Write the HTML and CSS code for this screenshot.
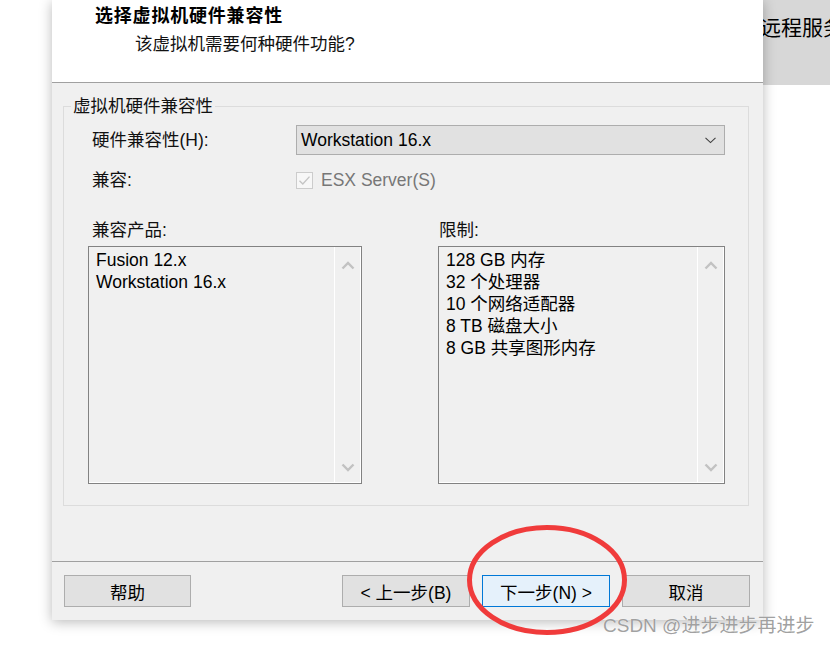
FILE: index.html
```html
<!DOCTYPE html>
<html lang="zh-CN">
  <head>
    <meta charset="UTF-8" />
    <meta name="viewport" content="width=device-width, initial-scale=1.0" />
    <title>新建虚拟机向导 - 选择虚拟机硬件兼容性</title>
    <link rel="stylesheet" href="styles.css">
  </head>
  <body>
    <div class="screen">
      <div class="gutter"></div>

      <div class="dialog">
        <div class="dialog-header">
          <div class="title">选择虚拟机硬件兼容性</div>
          <div class="subtitle">该虚拟机需要何种硬件功能?</div>
        </div>

        <div class="dialog-body">
          <fieldset class="group">
            <legend>虚拟机硬件兼容性</legend>

            <div class="row">
              <span class="label">硬件兼容性(H):</span>
              <div class="select">
                <span>Workstation 16.x</span>
                <svg width="11" height="7" viewBox="0 0 11 7"><path d="M0.5 0.8 L5.5 5.6 L10.5 0.8" fill="none" stroke="#404040" stroke-width="1.1"/></svg>
              </div>
            </div>

            <div class="row row-compat">
              <span class="label">兼容:</span>
              <span class="checkbox">
                <svg width="15" height="15" viewBox="0 0 15 15"><path d="M2.5 7.8 L5.8 11 L12.5 3.6" fill="none" stroke="#c4c4c4" stroke-width="1.4"/></svg>
              </span>
              <span class="check-label">ESX Server(S)</span>
            </div>

            <div class="lists">
              <div class="list-col list-products">
                <div class="list-title">兼容产品:</div>
                <div class="listbox">
                  <ul class="items">
                    <li>Fusion 12.x</li>
                    <li>Workstation 16.x</li>
                  </ul>
                  <div class="scrollbar">
                    <svg width="14" height="9" viewBox="0 0 14 9"><path d="M1.5 7.5 L7 2 L12.5 7.5" fill="none" stroke="#c2c2c2" stroke-width="2.4"/></svg>
                    <svg width="14" height="9" viewBox="0 0 14 9"><path d="M1.5 1.5 L7 7 L12.5 1.5" fill="none" stroke="#c2c2c2" stroke-width="2.4"/></svg>
                  </div>
                </div>
              </div>

              <div class="list-col list-limits">
                <div class="list-title">限制:</div>
                <div class="listbox">
                  <ul class="items">
                    <li>128 GB 内存</li>
                    <li>32 个处理器</li>
                    <li>10 个网络适配器</li>
                    <li>8 TB 磁盘大小</li>
                    <li>8 GB 共享图形内存</li>
                  </ul>
                  <div class="scrollbar">
                    <svg width="14" height="9" viewBox="0 0 14 9"><path d="M1.5 7.5 L7 2 L12.5 7.5" fill="none" stroke="#c2c2c2" stroke-width="2.4"/></svg>
                    <svg width="14" height="9" viewBox="0 0 14 9"><path d="M1.5 1.5 L7 7 L12.5 1.5" fill="none" stroke="#c2c2c2" stroke-width="2.4"/></svg>
                  </div>
                </div>
              </div>
            </div>
          </fieldset>
        </div>

        <div class="dialog-footer">
          <button class="btn btn-help">帮助</button>
          <button class="btn">&lt; 上一步(B)</button>
          <button class="btn btn-default">下一步(N) &gt;</button>
          <button class="btn">取消</button>
        </div>
      </div>

      <div class="side">
        <div class="side-top">远程服务</div>
      </div>

      <svg class="mark" width="160" height="110" viewBox="0 0 160 110">
        <ellipse cx="80" cy="55" rx="77.5" ry="52.5" fill="none" stroke="#f03b3b" stroke-width="5"/>
      </svg>
      <div class="watermark">CSDN @进步进步再进步</div>
    </div>
  </body>
</html>
```

FILE: styles.css
```css
* {
  box-sizing: border-box;
  margin: 0;
  padding: 0;
}

body {
  font-family: "Liberation Sans", "Noto Sans CJK SC", sans-serif;
  font-size: 17.5px;
  color: #111;
  background-color: #fff;
}

.screen {
  position: relative;
  display: flex;
  align-items: flex-start;
  width: 830px;
  height: 645px;
  overflow: hidden;
}

.gutter {
  flex: 0 0 52px;
}

.dialog {
  position: relative;
  z-index: 1;
  flex: 0 0 711px;
  height: 620px;
  display: flex;
  flex-direction: column;
  background-color: #f0f0f0;
  box-shadow: 0 2px 12px rgba(0, 0, 0, 0.28);
}

/* header */
.dialog-header {
  height: 83px;
  padding: 5px 0 0 43px;
  background-color: #fff;
  border-bottom: 1px solid #a0a0a0;
}

.title {
  font-size: 18px;
  font-weight: bold;
  line-height: 22px;
  letter-spacing: 0.8px;
  color: #000;
}

.subtitle {
  margin: 6px 0 0 40px;
  line-height: 22px;
}

/* body */
.dialog-body {
  flex: 1;
  padding: 12px 14px 0 11px;
}

.group {
  min-width: 0;
  border: 1px solid #dcdcdc;
  padding: 8px 23px 21px 28px;
}

.group legend {
  margin-left: -21px;
  padding: 0 2px;
  line-height: 22px;
}

.row {
  display: flex;
  align-items: center;
  height: 30px;
}

.row-compat {
  height: 22px;
  margin-top: 14px;
}

.label {
  flex: 0 0 204px;
  line-height: 22px;
}

.select {
  display: flex;
  align-items: center;
  justify-content: space-between;
  width: 429px;
  height: 30px;
  padding: 0 8px 0 4px;
  background-color: #e1e1e1;
  border: 1px solid #adadad;
  color: #000;
}

.checkbox {
  display: flex;
  align-items: center;
  justify-content: center;
  width: 17px;
  height: 17px;
  border: 1px solid #cccccc;
  background-color: #f7f7f7;
}

.check-label {
  margin-left: 8px;
  color: #777;
}

.lists {
  display: flex;
  gap: 76px;
  margin: 28px 0 0 -4px;
}

.list-products {
  width: 274px;
}

.list-limits {
  width: 287px;
}

.list-title {
  line-height: 22px;
  padding-left: 4px;
}

.list-limits .list-title {
  padding-left: 1px;
}

.listbox {
  display: flex;
  height: 238px;
  margin-top: 5px;
  border: 1px solid #828282;
  box-shadow: inset -1px -1px 0 #fff;
  background-color: #f0f0f0;
}

.items {
  flex: 1;
  list-style: none;
  padding: 2px 0 0 7px;
  line-height: 22px;
  color: #000;
}

.scrollbar {
  flex: 0 0 27px;
  display: flex;
  flex-direction: column;
  align-items: center;
  justify-content: space-between;
  padding: 14px 1px 11px 0;
  border-left: 1px solid #fff;
}

/* footer */
.dialog-footer {
  display: flex;
  gap: 12px;
  padding: 13px 13px 13px 12px;
  border-top: 1px solid #a0a0a0;
}

.btn {
  width: 128px;
  height: 32px;
  font: inherit;
  color: #000;
  background-color: #e1e1e1;
  border: 1px solid #adadad;
}

.btn-help {
  width: 127px;
  margin-right: auto;
}

.btn-default {
  background-color: #e5f1fb;
  border-color: #0078d7;
}

/* window behind */
.side {
  flex: 1;
  min-width: 0;
}

.side-top {
  height: 85px;
  padding-top: 13px;
  background-color: #d7d7d7;
  font-size: 21px;
  line-height: 30px;
  color: #000;
  white-space: nowrap;
  text-indent: -3px;
  overflow: hidden;
}

/* annotations over the screenshot */
.mark {
  position: absolute;
  left: 467px;
  top: 525px;
  z-index: 2;
}

.watermark {
  position: absolute;
  left: 603px;
  top: 614px;
  z-index: 3;
  font-size: 19px;
  line-height: 24px;
  color: rgba(135, 135, 135, 0.8);
  text-shadow: 0 0 1px #fff;
  white-space: nowrap;
}
```
